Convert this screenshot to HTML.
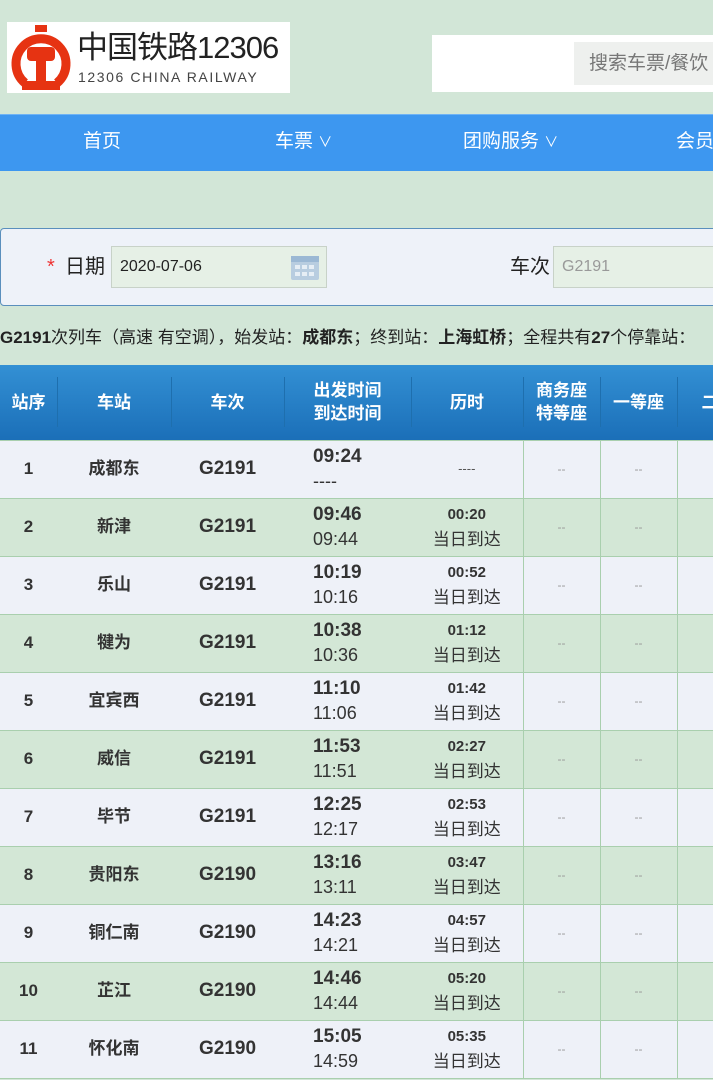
<!DOCTYPE html>
<html><head><meta charset="utf-8"><style>
*{margin:0;padding:0;box-sizing:border-box}
body{width:713px;height:1080px;overflow:hidden;background:#d2e6d7;font-family:"Liberation Sans","Noto Sans CJK SC",sans-serif;position:relative;color:#222}
.abs{position:absolute}
.logo{left:7px;top:22px;width:283px;height:71px;background:#fff;overflow:hidden}
.search{left:432px;top:35px;width:290px;height:57px;background:#fff}
.search div{position:absolute;left:142px;top:7px;width:200px;height:43px;background:#eef0ee;color:#777;font-size:19px;line-height:43px;padding-left:15px;white-space:nowrap}
.nav{left:0;top:114px;width:713px;height:57px;background:#3d97f0;border-top:1px solid #6fb3f5;color:#fff;font-size:19px;white-space:nowrap}
.nav span{position:absolute;top:14px;line-height:26px}
.form{left:0;top:228px;width:730px;height:78px;background:#eef2f9;border:1px solid #5a8fbd;border-radius:4px}
.form .lb{position:absolute;font-size:20px;line-height:26px;top:25px}
.inp{position:absolute;height:42px;border:1px solid #c8d2c8;background:#e6f0e6;font-size:16px;line-height:40px;padding-left:8px}
.info{left:0;top:326px;font-size:17px;line-height:24px;white-space:nowrap;letter-spacing:0}
table{position:absolute;left:0;top:365px;border-collapse:collapse;table-layout:fixed;width:760px}
th{height:75px;background:linear-gradient(#3390d4,#1b6fb8);color:#fff;font-size:17px;font-weight:bold;line-height:23px;text-align:center;position:relative;padding:0}
th+th{background-image:linear-gradient(#1e6fae,#1e6fae),linear-gradient(#3390d4,#1b6fb8);background-size:1px 50px,100% 100%;background-position:0 12px,0 0;background-repeat:no-repeat}
td{height:58px;border-top:1px solid #a9cfae;border-bottom:1px solid #a9cfae;text-align:center;font-size:16px;font-weight:bold;color:#333;line-height:22px;padding:0;vertical-align:middle}
td.x{border:1px solid #a9cfae}
tr:nth-child(even) td{background:#eef1f8}
tr:nth-child(odd) td{background:#d3e7d6}
td.t{text-align:left;padding-left:29px;line-height:25px}
td.t b{font-size:19px;display:block}
td.t span{font-weight:normal;font-size:18px}
td.d{line-height:25px;font-size:15px}
td.d span{font-weight:normal;font-size:17px}
td.n{font-size:19px}
td.s{font-size:17px}
td.x{font-weight:normal;color:#999;font-size:12px}
</style></head><body>
<div class="abs logo">
<svg width="64" height="66" viewBox="0 0 64 66" style="position:absolute;left:2px;top:3px">
<path d="M16 58 A25 25 0 1 1 48 58" fill="none" stroke="#e63312" stroke-width="9"/>
<rect x="26" y="0" width="12" height="7" fill="#e63312"/>
<rect x="18" y="22" width="28" height="14" rx="4" fill="#e63312"/>
<rect x="27" y="34" width="10" height="22" fill="#e63312"/>
<rect x="13" y="56" width="38" height="9" fill="#e63312"/>
</svg>
<div style="position:absolute;left:70px;top:6px;font-size:31px;line-height:40px;color:#222;letter-spacing:-1px;white-space:nowrap">中国铁路12306</div>
<div style="position:absolute;left:71px;top:46px;font-size:14px;line-height:18px;color:#444;letter-spacing:1.6px;white-space:nowrap">12306 CHINA RAILWAY</div>
</div>
<div class="abs search"><div>搜索车票/餐饮</div></div>
<div class="abs nav"><span style="left:83px">首页</span><span style="left:275px">车票 <small style="font-size:14px">∨</small></span><span style="left:463px">团购服务 <small style="font-size:14px">∨</small></span><span style="left:676px">会员</span></div>
<div class="abs form">
<span class="lb" style="left:46px;color:#e33">*</span>
<span class="lb" style="left:64px">日期</span>
<div class="inp" style="left:110px;top:17px;width:216px">2020-07-06
<svg width="30" height="28" style="position:absolute;right:6px;top:6px"><rect x="1" y="3" width="28" height="24" rx="2" fill="#b8cde0"/><rect x="1" y="3" width="28" height="6" fill="#9bb8d4"/><g fill="#e6eef5"><rect x="5" y="12" width="5" height="4"/><rect x="12" y="12" width="5" height="4"/><rect x="19" y="12" width="5" height="4"/><rect x="5" y="19" width="5" height="4"/><rect x="12" y="19" width="5" height="4"/><rect x="19" y="19" width="5" height="4"/></g></svg></div>
<span class="lb" style="left:509px">车次</span>
<div class="inp" style="left:552px;top:17px;width:200px;color:#999">G2191</div>
</div>
<div class="abs info"><b>G2191</b>次列车（高速 有空调），始发站：<b>成都东</b>；终到站：<b>上海虹桥</b>；全程共有<b>27</b>个停靠站：</div>
<table>
<colgroup><col style="width:57px"><col style="width:114px"><col style="width:113px"><col style="width:127px"><col style="width:112px"><col style="width:77px"><col style="width:77px"><col style="width:83px"></colgroup>
<tr><th style="background:linear-gradient(#3390d4,#1b6fb8)">站序</th><th>车站</th><th>车次</th><th>出发时间<br>到达时间</th><th>历时</th><th>商务座<br>特等座</th><th>一等座</th><th>二等</th></tr>
<tr><td class="s">1</td><td class="s">成都东</td><td class="n">G2191</td><td class="t"><b>09:24</b><span>----</span></td><td class="s" style="font-weight:normal;color:#555;font-size:13px;border-right:1px solid #a9cfae">----</td><td class="x">--</td><td class="x">--</td><td class="x">--</td></tr>
<tr><td class="s">2</td><td class="s">新津</td><td class="n">G2191</td><td class="t"><b>09:46</b><span>09:44</span></td><td class="d">00:20<br><span>当日到达</span></td><td class="x">--</td><td class="x">--</td><td class="x">--</td></tr>
<tr><td class="s">3</td><td class="s">乐山</td><td class="n">G2191</td><td class="t"><b>10:19</b><span>10:16</span></td><td class="d">00:52<br><span>当日到达</span></td><td class="x">--</td><td class="x">--</td><td class="x">--</td></tr>
<tr><td class="s">4</td><td class="s">犍为</td><td class="n">G2191</td><td class="t"><b>10:38</b><span>10:36</span></td><td class="d">01:12<br><span>当日到达</span></td><td class="x">--</td><td class="x">--</td><td class="x">--</td></tr>
<tr><td class="s">5</td><td class="s">宜宾西</td><td class="n">G2191</td><td class="t"><b>11:10</b><span>11:06</span></td><td class="d">01:42<br><span>当日到达</span></td><td class="x">--</td><td class="x">--</td><td class="x">--</td></tr>
<tr><td class="s">6</td><td class="s">威信</td><td class="n">G2191</td><td class="t"><b>11:53</b><span>11:51</span></td><td class="d">02:27<br><span>当日到达</span></td><td class="x">--</td><td class="x">--</td><td class="x">--</td></tr>
<tr><td class="s">7</td><td class="s">毕节</td><td class="n">G2191</td><td class="t"><b>12:25</b><span>12:17</span></td><td class="d">02:53<br><span>当日到达</span></td><td class="x">--</td><td class="x">--</td><td class="x">--</td></tr>
<tr><td class="s">8</td><td class="s">贵阳东</td><td class="n">G2190</td><td class="t"><b>13:16</b><span>13:11</span></td><td class="d">03:47<br><span>当日到达</span></td><td class="x">--</td><td class="x">--</td><td class="x">--</td></tr>
<tr><td class="s">9</td><td class="s">铜仁南</td><td class="n">G2190</td><td class="t"><b>14:23</b><span>14:21</span></td><td class="d">04:57<br><span>当日到达</span></td><td class="x">--</td><td class="x">--</td><td class="x">--</td></tr>
<tr><td class="s">10</td><td class="s">芷江</td><td class="n">G2190</td><td class="t"><b>14:46</b><span>14:44</span></td><td class="d">05:20<br><span>当日到达</span></td><td class="x">--</td><td class="x">--</td><td class="x">--</td></tr>
<tr><td class="s">11</td><td class="s">怀化南</td><td class="n">G2190</td><td class="t"><b>15:05</b><span>14:59</span></td><td class="d">05:35<br><span>当日到达</span></td><td class="x">--</td><td class="x">--</td><td class="x">--</td></tr>
</table>
</body></html>
